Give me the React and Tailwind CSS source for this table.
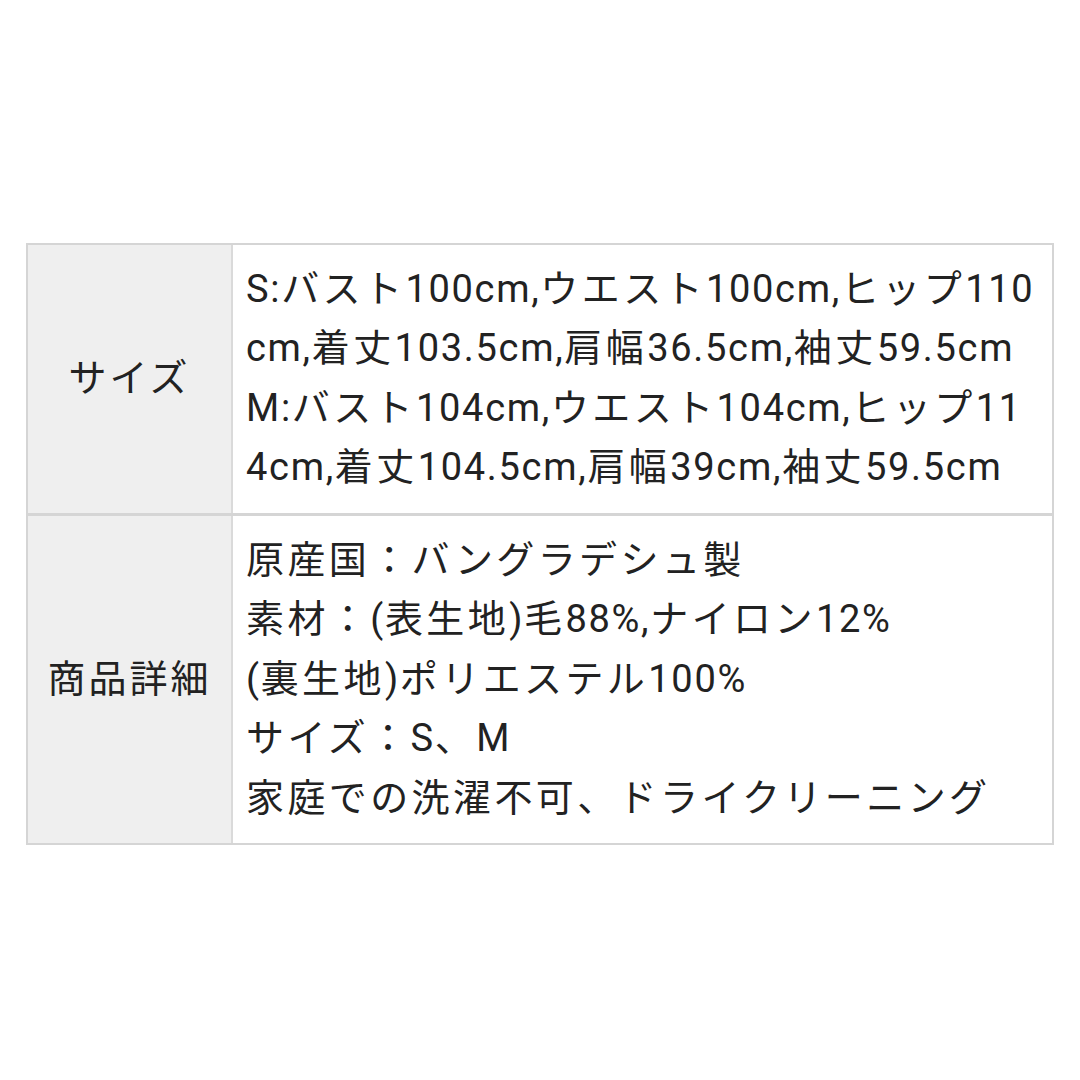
const CJK = /([\u3000-\u30ff\u4e00-\u9fff\uff00-\uffef]+)/;

function Line({ text }) {
  return (
    <div className="whitespace-nowrap">
      {text.split(CJK).map((part, k) =>
        CJK.test(part) ? (
          <span key={k} className="tracking-[3.4px]">{part}</span>
        ) : (
          <span key={k} className="tracking-[1.7px]">{part}</span>
        )
      )}
    </div>
  );
}

export default function App() {
  const rows = [
    {
      label: 'サイズ',
      lines: [
        'S:バスト100cm,ウエスト100cm,ヒップ110',
        'cm,着丈103.5cm,肩幅36.5cm,袖丈59.5cm',
        'M:バスト104cm,ウエスト104cm,ヒップ11',
        '4cm,着丈104.5cm,肩幅39cm,袖丈59.5cm',
      ],
    },
    {
      label: '商品詳細',
      lines: [
        '原産国：バングラデシュ製',
        '素材：(表生地)毛88%,ナイロン12%',
        '(裏生地)ポリエステル100%',
        'サイズ：S、M',
        '家庭での洗濯不可、ドライクリーニング',
      ],
    },
  ];

  return (
    <div
      className="w-[1080px] h-[1080px] bg-white flex items-center pt-[8px] px-[26px] text-[#222]"
      style={{ fontFamily: 'Roboto, "Noto Sans CJK JP", sans-serif' }}
    >
      <div className="w-[1028px] border-2 border-[#d5d5d5]">
        {rows.map((row, i) => (
          <div key={i} className={`flex ${i > 0 ? 'border-t-[3px] border-[#d5d5d5]' : ''}`}>
            <div className="w-[205px] shrink-0 bg-[#efefef] border-r-2 border-[#dadada] flex items-center justify-center text-[38px] tracking-[3px]">
              {row.label}
            </div>
            <div className="flex-1 pl-[13px] pr-[4px] py-[15px] text-[38px] leading-[59.5px]">
              {row.lines.map((l, j) => (
                <Line key={j} text={l} />
              ))}
            </div>
          </div>
        ))}
      </div>
    </div>
  );
}
